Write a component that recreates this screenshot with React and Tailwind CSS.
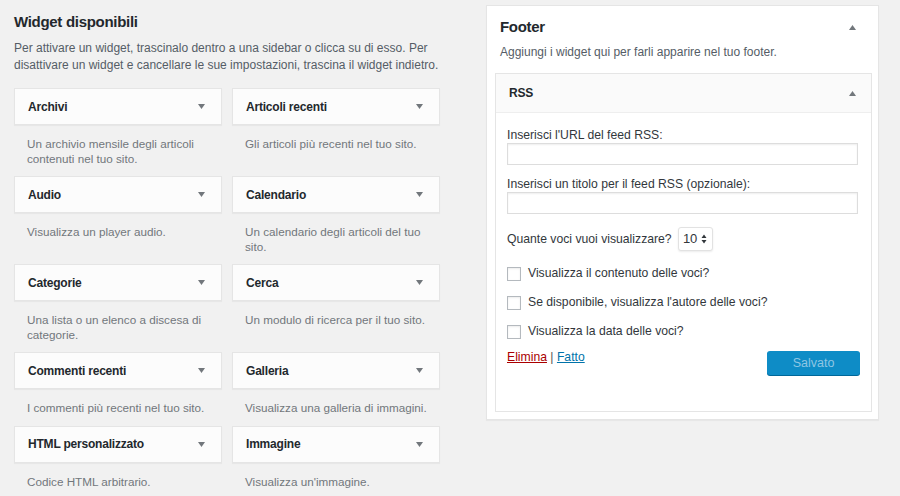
const widgets = [
  ['Archivi', 'Un archivio mensile degli articoli contenuti nel tuo sito.'],
  ['Articoli recenti', 'Gli articoli più recenti nel tuo sito.'],
  ['Audio', 'Visualizza un player audio.'],
  ['Calendario', 'Un calendario degli articoli del tuo sito.'],
  ['Categorie', 'Una lista o un elenco a discesa di categorie.'],
  ['Cerca', 'Un modulo di ricerca per il tuo sito.'],
  ['Commenti recenti', 'I commenti più recenti nel tuo sito.'],
  ['Galleria', 'Visualizza una galleria di immagini.'],
  ['HTML personalizzato', 'Codice HTML arbitrario.'],
  ['Immagine', "Visualizza un'immagine."],
]

function Arrow({ up }) {
  return (
    <svg width="7" height="5" viewBox="0 0 7 5" className="text-[#72777c]">
      <path d={up ? 'M0 5 L3.5 0 L7 5 Z' : 'M0 0 L7 0 L3.5 5 Z'} fill="currentColor" />
    </svg>
  )
}

function Widget({ title, desc }) {
  return (
    <div>
      <div className="flex h-[37px] items-center justify-between border border-[#e5e5e5] bg-[#fcfcfc] pl-[13px] pr-[16px] shadow-[0_1px_1px_rgba(0,0,0,0.04)]">
        <span className="text-[12px] font-bold tracking-[-0.2px] text-[#23282d]">{title}</span>
        <Arrow />
      </div>
      <p className="px-[13px] pb-[10px] pt-[12px] text-[11.7px] leading-[14.5px] text-[#72777c]">{desc}</p>
    </div>
  )
}

function Check({ label }) {
  return (
    <label className="flex h-[19px] items-center gap-[7px]">
      <span className="h-[14px] w-[14px] border border-[#b4b9be] bg-white shadow-[inset_0_1px_2px_rgba(0,0,0,0.08)]" />
      <span>{label}</span>
    </label>
  )
}

export default function App() {
  return (
    <div className="flex h-[496px] w-[900px] overflow-hidden bg-[#f1f1f1] font-['Liberation_Sans',Arial,sans-serif] text-[#23282d]">
      {/* available widgets */}
      <div className="ml-[14px] w-[426px] pt-[10px]">
        <h2 className="text-[15px] font-bold leading-6 tracking-[-0.3px]">Widget disponibili</h2>
        <p className="mt-[5.5px] text-[12px] leading-[17px] text-[#555d66]">
          Per attivare un widget, trascinalo dentro a una sidebar o clicca su di esso. Per disattivare un widget e cancellare le sue impostazioni, trascina il widget indietro.
        </p>
        <div className="mt-[14.5px] grid grid-cols-2 gap-x-[10px]">
          {widgets.map(([t, d]) => (
            <Widget key={t} title={t} desc={d} />
          ))}
        </div>
      </div>

      {/* sidebar */}
      <div className="ml-[46px] mt-[5px] h-[415px] w-[393px] border border-[#e5e5e5] bg-white shadow-[0_1px_1px_rgba(0,0,0,0.04)]">
        <div className="flex items-center justify-between pl-[13px] pr-[22px] pt-[9px]">
          <h2 className="text-[15px] font-bold leading-6 tracking-[-0.3px]">Footer</h2>
          <Arrow up />
        </div>
        <p className="ml-[13px] mt-[4.5px] text-[12px] leading-[17px] text-[#555d66]">Aggiungi i widget qui per farli apparire nel tuo footer.</p>

        <div className="ml-[8px] mt-[12.5px] h-[339px] w-[377px] border border-[#e5e5e5] bg-white">
          <div className="flex h-[39px] items-center justify-between border-b border-[#eee] bg-[#fafafa] pl-[13px] pr-[15px]">
            <span className="text-[12px] font-bold tracking-[-0.2px]">RSS</span>
            <Arrow up />
          </div>
          <div className="px-[11px] pt-[15px] text-[12.2px] text-[#32373c]">
            <div className="leading-[15px]">Inserisci l'URL del feed RSS:</div>
            <div className="h-[22px] w-[351px] border border-[#ddd] bg-white shadow-[inset_0_1px_2px_rgba(0,0,0,0.07)]" />
            <div className="mt-[12px] leading-[15px]">Inserisci un titolo per il feed RSS (opzionale):</div>
            <div className="h-[22px] w-[351px] border border-[#ddd] bg-white shadow-[inset_0_1px_2px_rgba(0,0,0,0.07)]" />
            <div className="mt-[13px] flex h-[24px] items-center gap-[6px]">
              <span>Quante voci vuoi visualizzare?</span>
              <span className="flex h-[24px] w-[35px] items-center justify-center gap-[4px] rounded-[3px] border border-[#e2e2e2] bg-white text-[13px] shadow-[0_1px_2px_rgba(0,0,0,0.08)]">
                10
                <svg width="6" height="10" viewBox="0 0 6 10" className="text-[#32373c]">
                  <path d="M0.5 4 L3 0.5 L5.5 4 Z M0.5 6 L3 9.5 L5.5 6 Z" fill="currentColor" />
                </svg>
              </span>
            </div>
            <div className="mt-[13px] flex flex-col gap-[10px]">
              <Check label="Visualizza il contenuto delle voci?" />
              <Check label="Se disponibile, visualizza l'autore delle voci?" />
              <Check label="Visualizza la data delle voci?" />
            </div>
            <div className="mt-[8px] flex items-start justify-between">
              <div className="leading-[17px]">
                <a className="text-[#a00] underline">Elimina</a>
                <span className="text-[#555]"> | </span>
                <a className="text-[#0073aa] underline">Fatto</a>
              </div>
              <button className="mt-[2px] h-[24px] w-[93px] rounded-[3px] bg-[#0e8cc6] text-[12.5px] text-[#8fc6e4] shadow-[0_1px_0_#006799]">Salvato</button>
            </div>
          </div>
        </div>
      </div>
    </div>
  )
}
